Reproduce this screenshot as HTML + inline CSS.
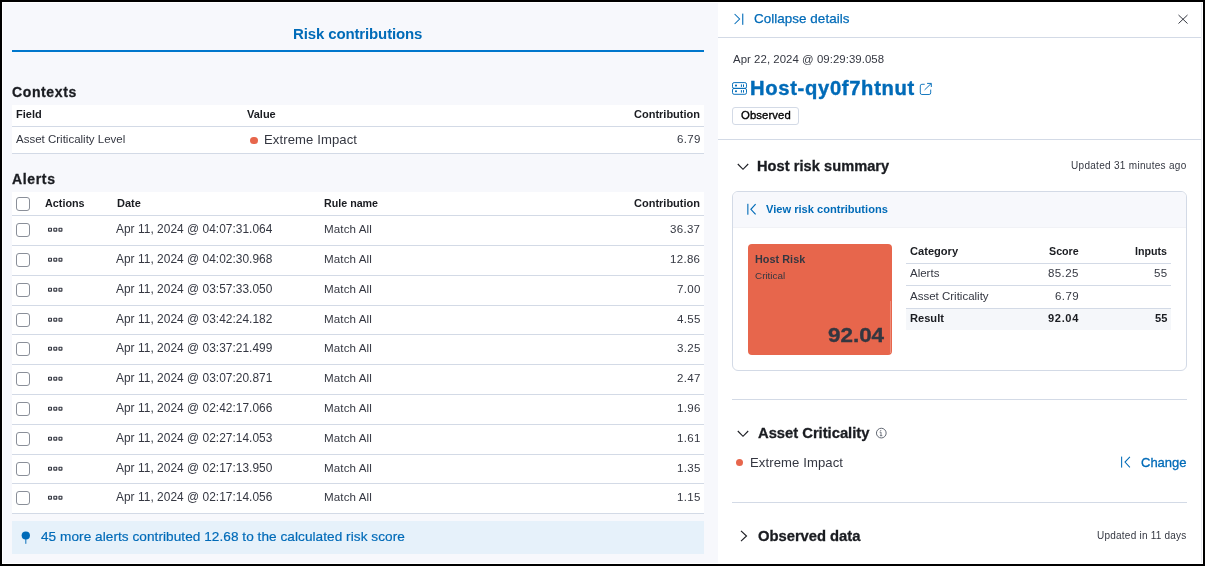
<!DOCTYPE html>
<html><head><meta charset="utf-8"><style>
html,body{margin:0;padding:0;}
body{width:1205px;height:566px;background:#000;position:relative;overflow:hidden;font-family:"Liberation Sans",sans-serif;}
.t{position:absolute;line-height:1;white-space:nowrap;-webkit-font-smoothing:antialiased;will-change:transform;}
</style></head><body>
<div style="position:absolute;left:2px;top:2px;width:1201px;height:562px;background:#fff;"></div>
<div style="position:absolute;left:3px;top:3px;width:715px;height:560px;background:#F7F8FC;"></div>
<div style="position:absolute;left:1201px;top:3px;width:1px;height:560px;background:#E9EBF0;"></div>
<div class="t" style="left:293px;top:26.00px;font-size:15px;font-weight:700;color:#006BB8;letter-spacing:-0.13px;">Risk contributions</div>
<div style="position:absolute;left:12px;top:50px;width:692px;height:2px;background:#0077CC;"></div>
<div class="t" style="left:12.4px;top:85.00px;font-size:14px;font-weight:700;color:#1A1C21;letter-spacing:0.62px;-webkit-text-stroke:0.3px #1A1C21;">Contexts</div>
<div style="position:absolute;left:12px;top:105px;width:692px;height:48px;background:#fff;"></div>
<div style="position:absolute;left:12px;top:126px;width:692px;height:1px;background:#D3DAE6;"></div>
<div style="position:absolute;left:12px;top:153px;width:692px;height:1px;background:#D3DAE6;"></div>
<div class="t" style="left:16px;top:109.00px;font-size:11px;font-weight:700;color:#1A1C21;">Field</div>
<div class="t" style="left:247px;top:109.00px;font-size:11px;font-weight:700;color:#1A1C21;">Value</div>
<div class="t" style="right:505px;top:109.00px;font-size:11px;font-weight:700;color:#1A1C21;">Contribution</div>
<div class="t" style="left:16px;top:134.00px;font-size:11.5px;font-weight:400;color:#343741;">Asset Criticality Level</div>
<div style="position:absolute;left:250px;top:136.5px;width:7.5px;height:7.5px;background:#E7664C;border-radius:50%;"></div>
<div class="t" style="left:264px;top:133.00px;font-size:13.1px;font-weight:400;color:#343741;letter-spacing:0.1px;">Extreme Impact</div>
<div class="t" style="right:505px;top:134.00px;font-size:11.5px;font-weight:400;color:#343741;letter-spacing:0.3px;margin-right:-0.3px;">6.79</div>
<div class="t" style="left:12.4px;top:172.00px;font-size:14px;font-weight:700;color:#1A1C21;letter-spacing:0.66px;-webkit-text-stroke:0.3px #1A1C21;">Alerts</div>
<div style="position:absolute;left:12px;top:192px;width:692px;height:321px;background:#fff;"></div>
<div style="position:absolute;left:16px;top:197px;width:14px;height:14px;box-sizing:border-box;border:1px solid #8A8F99;border-radius:3px;background:#fff;"></div>
<div class="t" style="left:45px;top:198.00px;font-size:10.8px;font-weight:700;color:#1A1C21;">Actions</div>
<div class="t" style="left:116.6px;top:198.00px;font-size:11px;font-weight:700;color:#1A1C21;">Date</div>
<div class="t" style="left:324.3px;top:198.00px;font-size:10.7px;font-weight:700;color:#1A1C21;">Rule name</div>
<div class="t" style="right:505px;top:198.00px;font-size:11px;font-weight:700;color:#1A1C21;">Contribution</div>
<div style="position:absolute;left:12px;top:215px;width:692px;height:1px;background:#D3DAE6;"></div>
<div style="position:absolute;left:12px;top:245px;width:692px;height:1px;background:#D3DAE6;"></div>
<div style="position:absolute;left:12px;top:275px;width:692px;height:1px;background:#D3DAE6;"></div>
<div style="position:absolute;left:12px;top:305px;width:692px;height:1px;background:#D3DAE6;"></div>
<div style="position:absolute;left:12px;top:334px;width:692px;height:1px;background:#D3DAE6;"></div>
<div style="position:absolute;left:12px;top:364px;width:692px;height:1px;background:#D3DAE6;"></div>
<div style="position:absolute;left:12px;top:394px;width:692px;height:1px;background:#D3DAE6;"></div>
<div style="position:absolute;left:12px;top:424px;width:692px;height:1px;background:#D3DAE6;"></div>
<div style="position:absolute;left:12px;top:454px;width:692px;height:1px;background:#D3DAE6;"></div>
<div style="position:absolute;left:12px;top:483px;width:692px;height:1px;background:#D3DAE6;"></div>
<div style="position:absolute;left:12px;top:513px;width:692px;height:1px;background:#D3DAE6;"></div>
<div style="position:absolute;left:16px;top:223px;width:14px;height:14px;box-sizing:border-box;border:1px solid #8A8F99;border-radius:3px;background:#fff;"></div>
<svg style="position:absolute;left:47px;top:226px" width="17" height="7" viewBox="0 0 17 7"><g fill="none" stroke="#343741" stroke-width="1.15"><rect x="1.55" y="2.2" width="2.9" height="2.9" rx="0.4"/><rect x="6.85" y="2.2" width="2.9" height="2.9" rx="0.4"/><rect x="12.0" y="2.2" width="2.9" height="2.9" rx="0.4"/></g></svg>
<div class="t" style="left:116.4px;top:224.00px;font-size:11.9px;font-weight:400;color:#343741;letter-spacing:0.04px;">Apr 11, 2024 @ 04:07:31.064</div>
<div class="t" style="left:323.8px;top:223.00px;font-size:11.6px;font-weight:400;color:#343741;letter-spacing:0.1px;">Match All</div>
<div class="t" style="right:505px;top:224.00px;font-size:11.5px;font-weight:400;color:#343741;letter-spacing:0.3px;margin-right:-0.3px;">36.37</div>
<div style="position:absolute;left:16px;top:253px;width:14px;height:14px;box-sizing:border-box;border:1px solid #8A8F99;border-radius:3px;background:#fff;"></div>
<svg style="position:absolute;left:47px;top:256px" width="17" height="7" viewBox="0 0 17 7"><g fill="none" stroke="#343741" stroke-width="1.15"><rect x="1.55" y="2.2" width="2.9" height="2.9" rx="0.4"/><rect x="6.85" y="2.2" width="2.9" height="2.9" rx="0.4"/><rect x="12.0" y="2.2" width="2.9" height="2.9" rx="0.4"/></g></svg>
<div class="t" style="left:116.4px;top:254.00px;font-size:11.9px;font-weight:400;color:#343741;letter-spacing:0.04px;">Apr 11, 2024 @ 04:02:30.968</div>
<div class="t" style="left:323.8px;top:253.00px;font-size:11.6px;font-weight:400;color:#343741;letter-spacing:0.1px;">Match All</div>
<div class="t" style="right:505px;top:254.00px;font-size:11.5px;font-weight:400;color:#343741;letter-spacing:0.3px;margin-right:-0.3px;">12.86</div>
<div style="position:absolute;left:16px;top:283px;width:14px;height:14px;box-sizing:border-box;border:1px solid #8A8F99;border-radius:3px;background:#fff;"></div>
<svg style="position:absolute;left:47px;top:286px" width="17" height="7" viewBox="0 0 17 7"><g fill="none" stroke="#343741" stroke-width="1.15"><rect x="1.55" y="2.2" width="2.9" height="2.9" rx="0.4"/><rect x="6.85" y="2.2" width="2.9" height="2.9" rx="0.4"/><rect x="12.0" y="2.2" width="2.9" height="2.9" rx="0.4"/></g></svg>
<div class="t" style="left:116.4px;top:284.00px;font-size:11.9px;font-weight:400;color:#343741;letter-spacing:0.04px;">Apr 11, 2024 @ 03:57:33.050</div>
<div class="t" style="left:323.8px;top:283.00px;font-size:11.6px;font-weight:400;color:#343741;letter-spacing:0.1px;">Match All</div>
<div class="t" style="right:505px;top:284.00px;font-size:11.5px;font-weight:400;color:#343741;letter-spacing:0.3px;margin-right:-0.3px;">7.00</div>
<div style="position:absolute;left:16px;top:313px;width:14px;height:14px;box-sizing:border-box;border:1px solid #8A8F99;border-radius:3px;background:#fff;"></div>
<svg style="position:absolute;left:47px;top:316px" width="17" height="7" viewBox="0 0 17 7"><g fill="none" stroke="#343741" stroke-width="1.15"><rect x="1.55" y="2.2" width="2.9" height="2.9" rx="0.4"/><rect x="6.85" y="2.2" width="2.9" height="2.9" rx="0.4"/><rect x="12.0" y="2.2" width="2.9" height="2.9" rx="0.4"/></g></svg>
<div class="t" style="left:116.4px;top:314.00px;font-size:11.9px;font-weight:400;color:#343741;letter-spacing:0.04px;">Apr 11, 2024 @ 03:42:24.182</div>
<div class="t" style="left:323.8px;top:313.00px;font-size:11.6px;font-weight:400;color:#343741;letter-spacing:0.1px;">Match All</div>
<div class="t" style="right:505px;top:314.00px;font-size:11.5px;font-weight:400;color:#343741;letter-spacing:0.3px;margin-right:-0.3px;">4.55</div>
<div style="position:absolute;left:16px;top:342px;width:14px;height:14px;box-sizing:border-box;border:1px solid #8A8F99;border-radius:3px;background:#fff;"></div>
<svg style="position:absolute;left:47px;top:345px" width="17" height="7" viewBox="0 0 17 7"><g fill="none" stroke="#343741" stroke-width="1.15"><rect x="1.55" y="2.2" width="2.9" height="2.9" rx="0.4"/><rect x="6.85" y="2.2" width="2.9" height="2.9" rx="0.4"/><rect x="12.0" y="2.2" width="2.9" height="2.9" rx="0.4"/></g></svg>
<div class="t" style="left:116.4px;top:343.00px;font-size:11.9px;font-weight:400;color:#343741;letter-spacing:0.04px;">Apr 11, 2024 @ 03:37:21.499</div>
<div class="t" style="left:323.8px;top:342.00px;font-size:11.6px;font-weight:400;color:#343741;letter-spacing:0.1px;">Match All</div>
<div class="t" style="right:505px;top:343.00px;font-size:11.5px;font-weight:400;color:#343741;letter-spacing:0.3px;margin-right:-0.3px;">3.25</div>
<div style="position:absolute;left:16px;top:372px;width:14px;height:14px;box-sizing:border-box;border:1px solid #8A8F99;border-radius:3px;background:#fff;"></div>
<svg style="position:absolute;left:47px;top:375px" width="17" height="7" viewBox="0 0 17 7"><g fill="none" stroke="#343741" stroke-width="1.15"><rect x="1.55" y="2.2" width="2.9" height="2.9" rx="0.4"/><rect x="6.85" y="2.2" width="2.9" height="2.9" rx="0.4"/><rect x="12.0" y="2.2" width="2.9" height="2.9" rx="0.4"/></g></svg>
<div class="t" style="left:116.4px;top:373.00px;font-size:11.9px;font-weight:400;color:#343741;letter-spacing:0.04px;">Apr 11, 2024 @ 03:07:20.871</div>
<div class="t" style="left:323.8px;top:372.00px;font-size:11.6px;font-weight:400;color:#343741;letter-spacing:0.1px;">Match All</div>
<div class="t" style="right:505px;top:373.00px;font-size:11.5px;font-weight:400;color:#343741;letter-spacing:0.3px;margin-right:-0.3px;">2.47</div>
<div style="position:absolute;left:16px;top:402px;width:14px;height:14px;box-sizing:border-box;border:1px solid #8A8F99;border-radius:3px;background:#fff;"></div>
<svg style="position:absolute;left:47px;top:405px" width="17" height="7" viewBox="0 0 17 7"><g fill="none" stroke="#343741" stroke-width="1.15"><rect x="1.55" y="2.2" width="2.9" height="2.9" rx="0.4"/><rect x="6.85" y="2.2" width="2.9" height="2.9" rx="0.4"/><rect x="12.0" y="2.2" width="2.9" height="2.9" rx="0.4"/></g></svg>
<div class="t" style="left:116.4px;top:403.00px;font-size:11.9px;font-weight:400;color:#343741;letter-spacing:0.04px;">Apr 11, 2024 @ 02:42:17.066</div>
<div class="t" style="left:323.8px;top:402.00px;font-size:11.6px;font-weight:400;color:#343741;letter-spacing:0.1px;">Match All</div>
<div class="t" style="right:505px;top:403.00px;font-size:11.5px;font-weight:400;color:#343741;letter-spacing:0.3px;margin-right:-0.3px;">1.96</div>
<div style="position:absolute;left:16px;top:432px;width:14px;height:14px;box-sizing:border-box;border:1px solid #8A8F99;border-radius:3px;background:#fff;"></div>
<svg style="position:absolute;left:47px;top:435px" width="17" height="7" viewBox="0 0 17 7"><g fill="none" stroke="#343741" stroke-width="1.15"><rect x="1.55" y="2.2" width="2.9" height="2.9" rx="0.4"/><rect x="6.85" y="2.2" width="2.9" height="2.9" rx="0.4"/><rect x="12.0" y="2.2" width="2.9" height="2.9" rx="0.4"/></g></svg>
<div class="t" style="left:116.4px;top:433.00px;font-size:11.9px;font-weight:400;color:#343741;letter-spacing:0.04px;">Apr 11, 2024 @ 02:27:14.053</div>
<div class="t" style="left:323.8px;top:432.00px;font-size:11.6px;font-weight:400;color:#343741;letter-spacing:0.1px;">Match All</div>
<div class="t" style="right:505px;top:433.00px;font-size:11.5px;font-weight:400;color:#343741;letter-spacing:0.3px;margin-right:-0.3px;">1.61</div>
<div style="position:absolute;left:16px;top:462px;width:14px;height:14px;box-sizing:border-box;border:1px solid #8A8F99;border-radius:3px;background:#fff;"></div>
<svg style="position:absolute;left:47px;top:465px" width="17" height="7" viewBox="0 0 17 7"><g fill="none" stroke="#343741" stroke-width="1.15"><rect x="1.55" y="2.2" width="2.9" height="2.9" rx="0.4"/><rect x="6.85" y="2.2" width="2.9" height="2.9" rx="0.4"/><rect x="12.0" y="2.2" width="2.9" height="2.9" rx="0.4"/></g></svg>
<div class="t" style="left:116.4px;top:463.00px;font-size:11.9px;font-weight:400;color:#343741;letter-spacing:0.04px;">Apr 11, 2024 @ 02:17:13.950</div>
<div class="t" style="left:323.8px;top:462.00px;font-size:11.6px;font-weight:400;color:#343741;letter-spacing:0.1px;">Match All</div>
<div class="t" style="right:505px;top:463.00px;font-size:11.5px;font-weight:400;color:#343741;letter-spacing:0.3px;margin-right:-0.3px;">1.35</div>
<div style="position:absolute;left:16px;top:491px;width:14px;height:14px;box-sizing:border-box;border:1px solid #8A8F99;border-radius:3px;background:#fff;"></div>
<svg style="position:absolute;left:47px;top:494px" width="17" height="7" viewBox="0 0 17 7"><g fill="none" stroke="#343741" stroke-width="1.15"><rect x="1.55" y="2.2" width="2.9" height="2.9" rx="0.4"/><rect x="6.85" y="2.2" width="2.9" height="2.9" rx="0.4"/><rect x="12.0" y="2.2" width="2.9" height="2.9" rx="0.4"/></g></svg>
<div class="t" style="left:116.4px;top:492.00px;font-size:11.9px;font-weight:400;color:#343741;letter-spacing:0.04px;">Apr 11, 2024 @ 02:17:14.056</div>
<div class="t" style="left:323.8px;top:491.00px;font-size:11.6px;font-weight:400;color:#343741;letter-spacing:0.1px;">Match All</div>
<div class="t" style="right:505px;top:492.00px;font-size:11.5px;font-weight:400;color:#343741;letter-spacing:0.3px;margin-right:-0.3px;">1.15</div>
<div style="position:absolute;left:12px;top:521px;width:692px;height:33px;background:#E6F1FA;"></div>
<svg style="position:absolute;left:21px;top:531px" width="10" height="14" viewBox="0 0 10 14"><ellipse cx="4.8" cy="4.5" rx="4.15" ry="3.95" fill="#006BB8"/><rect x="4.35" y="6" width="0.95" height="6.8" fill="#006BB8"/></svg>
<div class="t" style="left:41.2px;top:530.00px;font-size:13.6px;font-weight:400;color:#006BB8;letter-spacing:0.056px;-webkit-text-stroke:0.2px #006BB8;">45 more alerts contributed 12.68 to the calculated risk score</div>
<div style="position:absolute;left:718px;top:37px;width:483px;height:1px;background:#D3DAE6;"></div>
<svg style="position:absolute;left:733px;top:12px" width="12" height="14" viewBox="0 0 12 14"><path d="M1.6 2 L6.6 7 L1.6 12" fill="none" stroke="#006BB8" stroke-width="1.05"/><rect x="9.2" y="1.6" width="1.1" height="11.2" fill="#006BB8"/></svg>
<div class="t" style="left:754.3px;top:12.00px;font-size:13.4px;font-weight:400;color:#006BB8;letter-spacing:0.06px;-webkit-text-stroke:0.25px #006BB8;">Collapse details</div>
<svg style="position:absolute;left:1177px;top:13px" width="12" height="12" viewBox="0 0 12 12"><path d="M1.5 2 L10.5 10.5 M10.5 2 L1.5 10.5" stroke="#343741" stroke-width="1"/></svg>
<div class="t" style="left:733px;top:54.00px;font-size:11.4px;font-weight:400;color:#343741;letter-spacing:0.055px;">Apr 22, 2024 @ 09:29:39.058</div>
<svg style="position:absolute;left:732px;top:82px" width="16" height="14" viewBox="0 0 16 14"><g fill="none" stroke="#006BB8" stroke-width="0.95"><rect x="0.5" y="0.6" width="14" height="5.8" rx="1.6"/><rect x="0.5" y="6.4" width="14" height="5.9" rx="1.6"/></g><g fill="#006BB8"><circle cx="4" cy="3.6" r="1.05"/><circle cx="4" cy="9.3" r="1.05"/><rect x="8.9" y="2.4" width="1" height="2.5"/><rect x="11" y="2.4" width="1" height="2.5"/><rect x="8.9" y="8.1" width="1" height="2.5"/><rect x="11" y="8.1" width="1" height="2.5"/></g></svg>
<div class="t" style="left:750px;top:78.00px;font-size:20.2px;font-weight:700;color:#006BB8;letter-spacing:0.68px;-webkit-text-stroke:0.4px #006BB8;">Host-qy0f7htnut</div>
<svg style="position:absolute;left:919px;top:82px" width="14" height="14" viewBox="0 0 14 14"><path d="M5.7 2.3 H2.9 A1.6 1.6 0 0 0 1.3 3.9 V10.9 A1.6 1.6 0 0 0 2.9 12.5 H10.1 A1.6 1.6 0 0 0 11.7 10.9 V7.6" fill="none" stroke="#006BB8" stroke-width="0.9"/><path d="M8.1 1.4 H12.3 V5 M12.1 1.6 L5.6 7.9" fill="none" stroke="#006BB8" stroke-width="0.95"/></svg>
<div style="position:absolute;left:732px;top:107px;width:67px;height:17.5px;box-sizing:border-box;border:1px solid #D3DAE6;border-radius:3px;background:#fff;"></div>
<div class="t" style="left:741px;top:110.00px;font-size:11.3px;font-weight:400;color:#000;letter-spacing:0.1px;-webkit-text-stroke:0.35px #000;">Observed</div>
<div style="position:absolute;left:718px;top:139px;width:483px;height:1px;background:#D3DAE6;"></div>
<svg style="position:absolute;left:736.5px;top:162.5px" width="12" height="8" viewBox="0 0 12 8"><path d="M0.8 1 L6 6.3 L11.2 1" fill="none" stroke="#1D1E24" stroke-width="1.15"/></svg>
<div class="t" style="left:757.2px;top:159.00px;font-size:14.6px;font-weight:700;color:#1A1C21;letter-spacing:0.05px;-webkit-text-stroke:0.3px #1A1C21;">Host risk summary</div>
<div class="t" style="right:18.5px;top:161.00px;font-size:10px;font-weight:400;color:#343741;letter-spacing:0.3px;margin-right:-0.3px;">Updated 31 minutes ago</div>
<div style="position:absolute;left:732px;top:191px;width:455px;height:180px;box-sizing:border-box;border:1px solid #D3DAE6;border-radius:6px;background:#fff;overflow:hidden;"></div>
<div style="position:absolute;left:733px;top:192px;width:453px;height:35px;background:#F7F8FC;border-radius:5px 5px 0 0;"></div>
<div style="position:absolute;left:733px;top:227px;width:453px;height:1px;background:#F1F2F6;"></div>
<svg style="position:absolute;left:746.3px;top:203px" width="11" height="12" viewBox="0 0 11 12"><rect x="1.3" y="0.8" width="1.1" height="10.9" fill="#006BB8"/><path d="M9.6 1.2 L4.9 6.3 L9.6 11.4" fill="none" stroke="#006BB8" stroke-width="1.15"/></svg>
<div class="t" style="left:766.2px;top:204.00px;font-size:11.1px;font-weight:700;color:#006BB8;">View risk contributions</div>
<div style="position:absolute;left:748px;top:244px;width:144px;height:111px;background:#E7664C;border-radius:4px;"></div>
<div style="position:absolute;left:890px;top:301px;width:1px;height:52px;background:#EE8E7B;"></div>
<div class="t" style="left:755px;top:254.00px;font-size:10.8px;font-weight:700;color:#343741;letter-spacing:0.05px;">Host Risk</div>
<div class="t" style="left:755px;top:271.00px;font-size:9.5px;font-weight:400;color:#343741;transform:scaleX(1.04);transform-origin:left center;">Critical</div>
<div class="t" style="right:321.4px;top:325.00px;font-size:20px;font-weight:700;color:#343741;transform:scaleX(1.12);transform-origin:right center;-webkit-text-stroke:0.35px #343741;">92.04</div>
<div class="t" style="left:910px;top:246.00px;font-size:11.1px;font-weight:700;color:#1A1C21;">Category</div>
<div class="t" style="right:126px;top:246.00px;font-size:10.7px;font-weight:700;color:#1A1C21;">Score</div>
<div class="t" style="right:37.799999999999955px;top:246.00px;font-size:10.7px;font-weight:700;color:#1A1C21;">Inputs</div>
<div style="position:absolute;left:906px;top:263px;width:265px;height:1px;background:#D3DAE6;"></div>
<div class="t" style="left:910px;top:268.00px;font-size:11.5px;font-weight:400;color:#343741;">Alerts</div>
<div class="t" style="right:126.5px;top:268.00px;font-size:11.5px;font-weight:400;color:#343741;letter-spacing:0.4px;margin-right:-0.4px;">85.25</div>
<div class="t" style="right:37.799999999999955px;top:268.00px;font-size:11.5px;font-weight:400;color:#343741;letter-spacing:0.4px;margin-right:-0.4px;">55</div>
<div style="position:absolute;left:906px;top:285px;width:265px;height:1px;background:#D3DAE6;"></div>
<div class="t" style="left:910px;top:291.00px;font-size:11.5px;font-weight:400;color:#343741;">Asset Criticality</div>
<div class="t" style="right:126.5px;top:291.00px;font-size:11.5px;font-weight:400;color:#343741;letter-spacing:0.4px;margin-right:-0.4px;">6.79</div>
<div style="position:absolute;left:906px;top:308px;width:265px;height:22px;background:#F5F7FA;"></div>
<div style="position:absolute;left:906px;top:308px;width:265px;height:1px;background:#D3DAE6;"></div>
<div class="t" style="left:910px;top:313.00px;font-size:11.1px;font-weight:700;color:#1A1C21;">Result</div>
<div class="t" style="right:126.5px;top:313.00px;font-size:11.1px;font-weight:700;color:#1A1C21;letter-spacing:0.65px;margin-right:-0.65px;">92.04</div>
<div class="t" style="right:37.799999999999955px;top:313.00px;font-size:11.1px;font-weight:700;color:#1A1C21;">55</div>
<div style="position:absolute;left:732px;top:399px;width:455px;height:1px;background:#D3DAE6;"></div>
<svg style="position:absolute;left:736.5px;top:429.5px" width="12" height="8" viewBox="0 0 12 8"><path d="M0.8 1 L6 6.3 L11.2 1" fill="none" stroke="#1D1E24" stroke-width="1.15"/></svg>
<div class="t" style="left:758px;top:426.00px;font-size:14.8px;font-weight:700;color:#1A1C21;letter-spacing:-0.03px;-webkit-text-stroke:0.3px #1A1C21;">Asset Criticality</div>
<svg style="position:absolute;left:875px;top:427px" width="13" height="13" viewBox="0 0 13 13"><circle cx="6.3" cy="6.1" r="4.85" fill="none" stroke="#5A606B" stroke-width="0.95"/><path d="M4.6 5.1 H6 V8.7 M4.9 8.7 H7.3" fill="none" stroke="#5A606B" stroke-width="0.85"/><circle cx="5.8" cy="3.5" r="0.55" fill="#5A606B"/></svg>
<div style="position:absolute;left:735.8px;top:458.8px;width:7px;height:7px;background:#E7664C;border-radius:50%;"></div>
<div class="t" style="left:749.8px;top:456.00px;font-size:13.1px;font-weight:400;color:#343741;letter-spacing:0.1px;">Extreme Impact</div>
<svg style="position:absolute;left:1120px;top:456px" width="11" height="12" viewBox="0 0 11 12"><rect x="1.1" y="0.6" width="1.05" height="11" fill="#006BB8"/><path d="M9.9 0.9 L5 6.1 L9.9 11.3" fill="none" stroke="#006BB8" stroke-width="1.05"/></svg>
<div class="t" style="right:18.90000000000009px;top:456.00px;font-size:13px;font-weight:400;color:#006BB8;-webkit-text-stroke:0.3px #006BB8;">Change</div>
<div style="position:absolute;left:732px;top:502px;width:455px;height:1px;background:#D3DAE6;"></div>
<svg style="position:absolute;left:739.5px;top:529.6px" width="8" height="13" viewBox="0 0 8 13"><path d="M1 0.8 L6.5 6 L1 11.2" fill="none" stroke="#1D1E24" stroke-width="1.15"/></svg>
<div class="t" style="left:758.2px;top:529.00px;font-size:14.8px;font-weight:700;color:#1A1C21;letter-spacing:-0.03px;-webkit-text-stroke:0.3px #1A1C21;">Observed data</div>
<div class="t" style="right:18.59999999999991px;top:531.00px;font-size:10px;font-weight:400;color:#343741;letter-spacing:0.23px;margin-right:-0.23px;">Updated in 11 days</div>
</body></html>
